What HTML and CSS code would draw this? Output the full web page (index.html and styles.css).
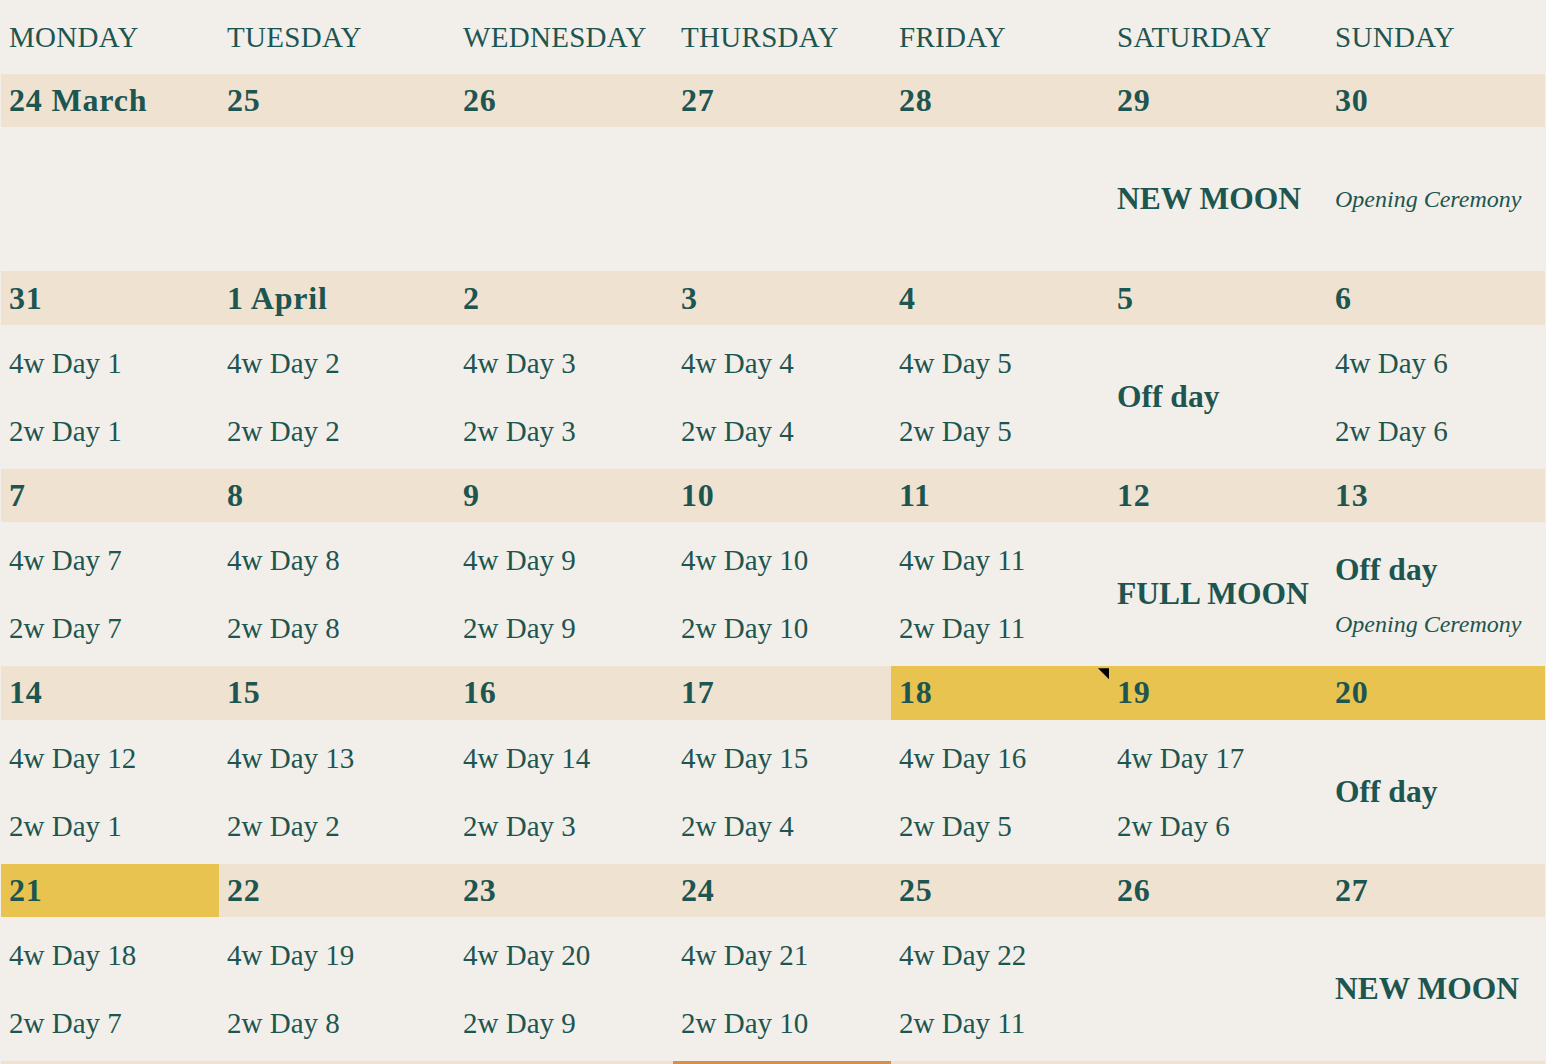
FILE: index.html
```html
<!DOCTYPE html>
<html lang="en">
<head>
<meta charset="utf-8">
<title>Calendar</title>
<link rel="stylesheet" href="styles.css">
</head>
<body>
<div class="cal">
  <div class="hd">MONDAY</div>
  <div class="hd">TUESDAY</div>
  <div class="hd">WEDNESDAY</div>
  <div class="hd">THURSDAY</div>
  <div class="hd">FRIDAY</div>
  <div class="hd">SATURDAY</div>
  <div class="hd">SUNDAY</div>

  <div class="date">24 March</div>
  <div class="date">25</div>
  <div class="date">26</div>
  <div class="date">27</div>
  <div class="date">28</div>
  <div class="date">29</div>
  <div class="date">30</div>

  <div class="body"></div>
  <div class="body"></div>
  <div class="body"></div>
  <div class="body"></div>
  <div class="body"></div>
  <div class="body"><div class="label">NEW MOON</div></div>
  <div class="body"><div class="cer">Opening Ceremony</div></div>

  <div class="date">31</div>
  <div class="date">1 April</div>
  <div class="date">2</div>
  <div class="date">3</div>
  <div class="date">4</div>
  <div class="date">5</div>
  <div class="date">6</div>

  <div class="body"><div class="ev">4w Day 1</div><div class="ev">2w Day 1</div></div>
  <div class="body"><div class="ev">4w Day 2</div><div class="ev">2w Day 2</div></div>
  <div class="body"><div class="ev">4w Day 3</div><div class="ev">2w Day 3</div></div>
  <div class="body"><div class="ev">4w Day 4</div><div class="ev">2w Day 4</div></div>
  <div class="body"><div class="ev">4w Day 5</div><div class="ev">2w Day 5</div></div>
  <div class="body"><div class="label">Off day</div></div>
  <div class="body"><div class="ev">4w Day 6</div><div class="ev">2w Day 6</div></div>

  <div class="date">7</div>
  <div class="date">8</div>
  <div class="date">9</div>
  <div class="date">10</div>
  <div class="date">11</div>
  <div class="date">12</div>
  <div class="date">13</div>

  <div class="body"><div class="ev">4w Day 7</div><div class="ev">2w Day 7</div></div>
  <div class="body"><div class="ev">4w Day 8</div><div class="ev">2w Day 8</div></div>
  <div class="body"><div class="ev">4w Day 9</div><div class="ev">2w Day 9</div></div>
  <div class="body"><div class="ev">4w Day 10</div><div class="ev">2w Day 10</div></div>
  <div class="body"><div class="ev">4w Day 11</div><div class="ev">2w Day 11</div></div>
  <div class="body"><div class="label">FULL MOON</div></div>
  <div class="body"><div class="label pair">Off day</div><div class="cer pair">Opening Ceremony</div></div>

  <div class="date">14</div>
  <div class="date">15</div>
  <div class="date">16</div>
  <div class="date">17</div>
  <div class="date hl">18<span class="marker"></span></div>
  <div class="date hl">19</div>
  <div class="date hl">20</div>

  <div class="body"><div class="ev">4w Day 12</div><div class="ev">2w Day 1</div></div>
  <div class="body"><div class="ev">4w Day 13</div><div class="ev">2w Day 2</div></div>
  <div class="body"><div class="ev">4w Day 14</div><div class="ev">2w Day 3</div></div>
  <div class="body"><div class="ev">4w Day 15</div><div class="ev">2w Day 4</div></div>
  <div class="body"><div class="ev">4w Day 16</div><div class="ev">2w Day 5</div></div>
  <div class="body"><div class="ev">4w Day 17</div><div class="ev">2w Day 6</div></div>
  <div class="body"><div class="label">Off day</div></div>

  <div class="date hl">21</div>
  <div class="date">22</div>
  <div class="date">23</div>
  <div class="date">24</div>
  <div class="date">25</div>
  <div class="date">26</div>
  <div class="date">27</div>

  <div class="body"><div class="ev">4w Day 18</div><div class="ev">2w Day 7</div></div>
  <div class="body"><div class="ev">4w Day 19</div><div class="ev">2w Day 8</div></div>
  <div class="body"><div class="ev">4w Day 20</div><div class="ev">2w Day 9</div></div>
  <div class="body"><div class="ev">4w Day 21</div><div class="ev">2w Day 10</div></div>
  <div class="body"><div class="ev">4w Day 22</div><div class="ev">2w Day 11</div></div>
  <div class="body"></div>
  <div class="body"><div class="label">NEW MOON</div></div>

  <div class="date"></div>
  <div class="date"></div>
  <div class="date"></div>
  <div class="date today"></div>
  <div class="date"></div>
  <div class="date"></div>
  <div class="date"></div>
</div>
</body>
</html>
```

FILE: styles.css
```css
html, body {
  margin: 0;
  padding: 0;
  background: #f2eee9;
}

body {
  font-family: "Liberation Serif", "Times New Roman", serif;
  color: #1d5550;
  overflow: hidden;
}

.cal {
  display: grid;
  grid-template-columns: 218px 236px 218px 218px 218px 218px 218px;
  grid-template-rows: 74px repeat(5, 53.4px 144px) 54px;
  padding: 0 1px;
}

.hd {
  display: flex;
  align-items: center;
  padding-left: 8px;
  font-size: 29px;
  letter-spacing: 0.3px;
}

.date {
  position: relative;
  display: flex;
  align-items: center;
  padding-left: 8px;
  background: #f0e2d0;
  font-weight: bold;
  font-size: 32px;
  letter-spacing: 0.8px;
}

.date.hl {
  background: #e8c34f;
}

.date.today {
  background: #d98f48;
}

.marker {
  position: absolute;
  top: 2px;
  right: 0;
  width: 11px;
  height: 11px;
  background: #000;
  clip-path: polygon(0 0, 100% 0, 100% 100%);
}

.body {
  display: flex;
  flex-direction: column;
  justify-content: center;
  padding-left: 8px;
}

.ev {
  font-size: 29px;
  line-height: 68px;
}

.label {
  font-weight: bold;
  font-size: 31.5px;
  line-height: 40px;
}

.cer {
  font-style: italic;
  font-size: 24px;
  line-height: 32px;
}

.label.pair {
  line-height: 60px;
}

.cer.pair {
  line-height: 48px;
}
```
